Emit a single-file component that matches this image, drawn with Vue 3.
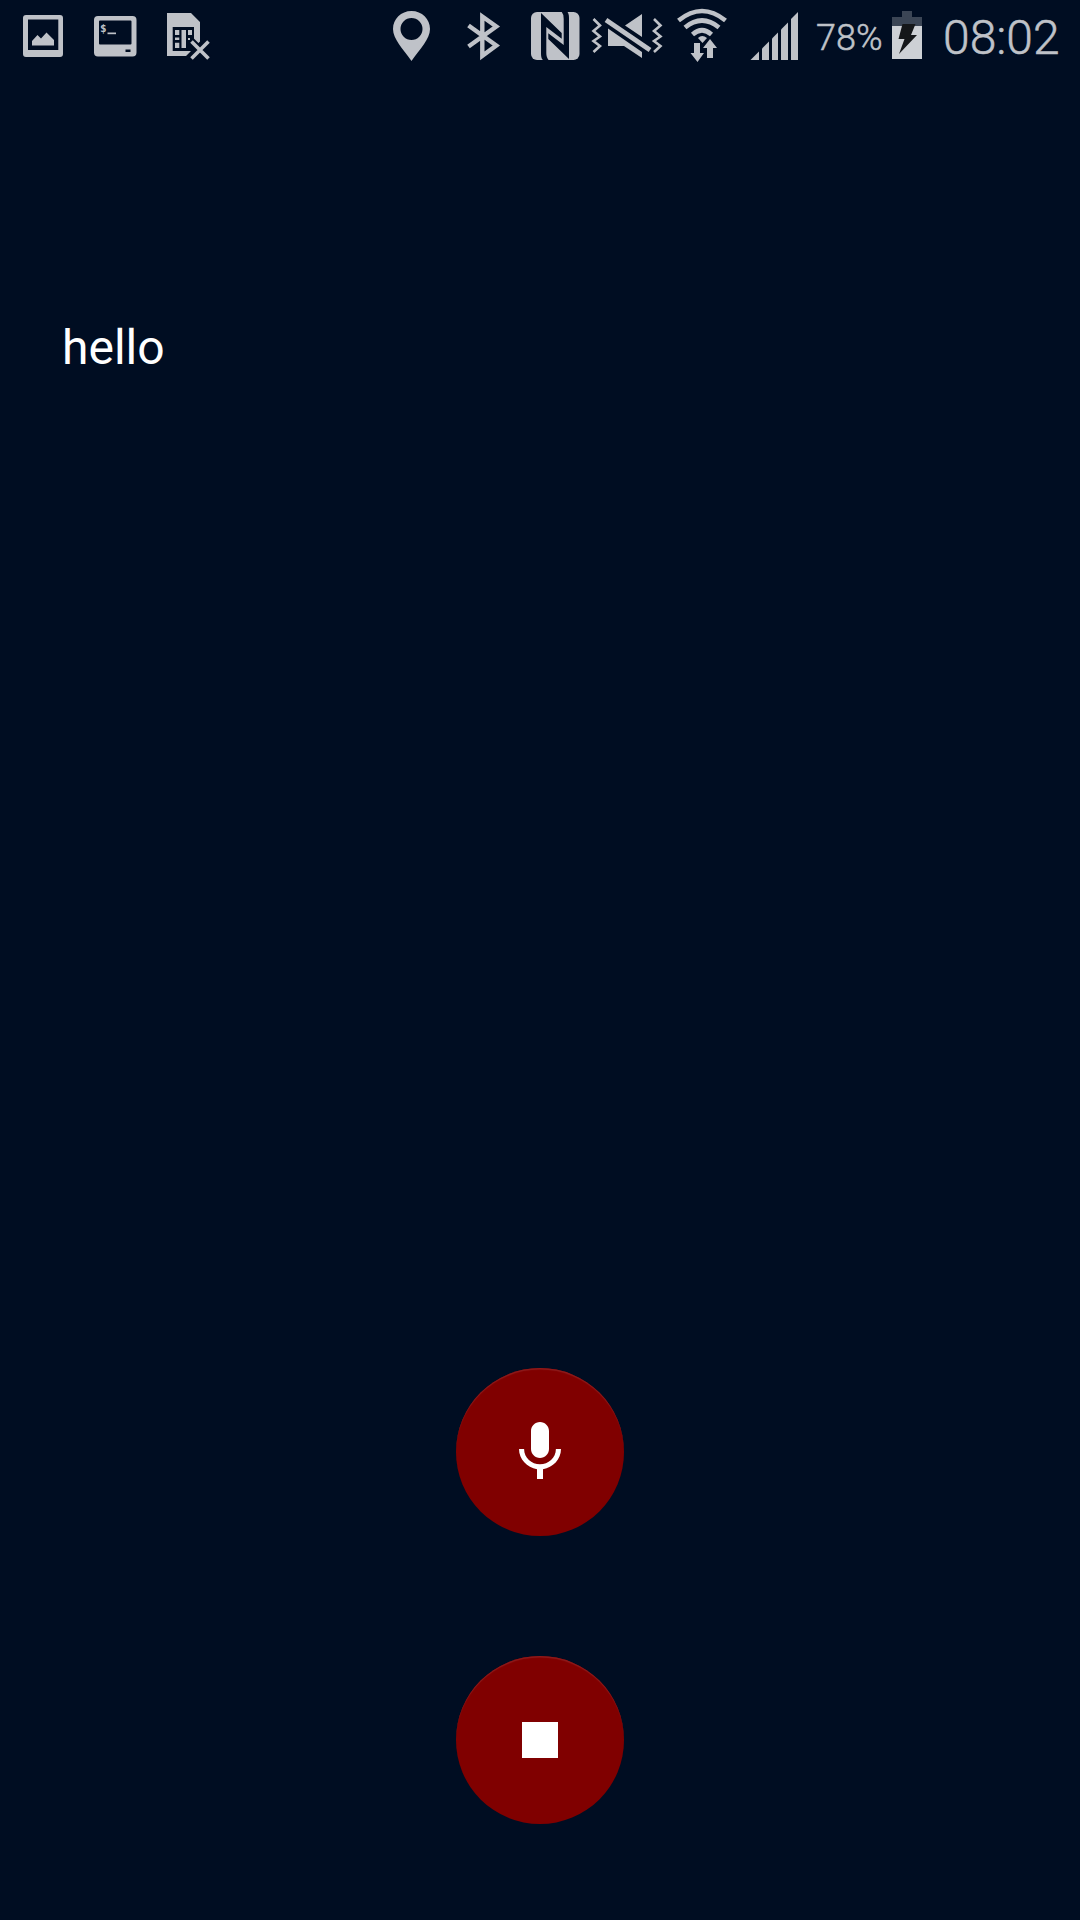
<script setup>
const bars = [
  'M750.500 60H759V51.500Z',
  'M762 60V48.500L769 41.500V60Z',
  'M772 60V38.500L778 32.500V60Z',
  'M781 60V29.500L788 22.500V60Z',
  'M791 60V19L798 12V60Z'
]
</script>

<template>
  <main class="screen">
    <header class="status">
      <svg width="75" height="75" viewBox="0 0 75 75">
        <path fill-rule="evenodd" d="M26 15H60Q63 15 63 18V54Q63 57 60 57H26Q23 57 23 54V18Q23 15 26 15ZM28 19.500V50H58.300V19.500Z" />
        <path d="M32 45.500V41L37.500 35L41 38.500L46.500 32.500L54 40V45.500Z" />
      </svg>
      <svg width="75" height="75" viewBox="75 0 75 75">
        <path fill-rule="evenodd" d="M98 16H132.500Q136.500 16 136.500 20V52.500Q136.500 56.500 132.500 56.500H98Q94 56.500 94 52.500V20Q94 16 98 16ZM100 20.500Q99 20.500 99 21.500V43.500Q99 44.500 100 44.500H130.500Q131.500 44.500 131.500 43.500V21.500Q131.500 20.500 130.500 20.500ZM125.500 49.500V52H130.500V49.500Z" />
        <text x="100" y="31.500" class="prompt">$</text>
        <path d="M107.500 32.500H116V34.200H107.500Z" />
      </svg>
      <svg width="75" height="75" viewBox="150 0 75 75">
        <path fill-rule="evenodd" d="M167 13H191L200 22V41.500L194 47.500V27H172.700V51H191L186 56H167Z" />
        <path d="M175 30H179.300V35H175ZM175 37.500H179.300V40H175ZM175 42.700H179.300V48H175ZM181.500 30H186V48H181.500ZM188 30H192V35H188ZM188 38H190V40H188Z" />
        <path class="cut" d="M191.500 41.500L208.500 58.500M208.500 41.500L191.500 58.500" />
        <path class="line" stroke-width="3.600" d="M191.500 41.500L208.500 58.500M208.500 41.500L191.500 58.500" />
      </svg>

      <svg class="push" width="75" height="75" viewBox="375 0 75 75">
        <path fill-rule="evenodd" d="M411.500 11C401 11 393 19 393 29C393 39 403 49 411.500 61C420 49 430 39 430 29C430 19 422 11 411.500 11ZM411.500 18A11 11 0 1 1 411.500 40A11 11 0 1 1 411.500 18Z" />
      </svg>
      <svg width="65" height="75" viewBox="450 0 65 75">
        <path class="line" stroke-width="4.400" d="M468.500 25.500L496.300 45.500L482.300 55.800V16.500L496.300 26.500L468.500 46.500" />
      </svg>
      <svg width="75" height="75" viewBox="515 0 75 75">
        <rect x="531" y="12" width="48.500" height="48" rx="6" />
        <path class="groove" d="M541 13L561.700 33V38.700L546.300 27V53Q546.300 58 549 60.500H543.500Q541 59 541 54Z" />
        <path class="groove" d="M569 59L548.300 39V33.300L563.700 45V19Q563.700 14 561.500 11.500H567Q569 13 569 18Z" />
      </svg>
      <svg width="78" height="75" viewBox="590 0 78 75">
        <path class="line" stroke-width="2.600" d="M593.500 19L600 25.500L593.500 31L600 36.500L593.500 41L600 46L593.500 52M654 19L660.500 25.500L654 31L660.500 36.500L654 41L660.500 46L654 52" />
        <path d="M608 28.500L642 52V58L624 46H608ZM642 14V37L625 25.500Z" />
        <path class="cut" d="M606 20L650 50" stroke-width="9" />
        <path class="line" stroke-width="4.800" d="M606 20L650 50" />
      </svg>
      <svg width="72" height="75" viewBox="668 0 72 75">
        <path class="line" stroke-width="4.600" d="M678.500 20.500Q702 1.500 725.500 20.500M685 27.500Q702 13.500 719 27.500M692.500 34.500Q702 26 711.500 34.500" />
        <path d="M698 38Q702 34 707 38L702.500 43Z" />
        <path d="M694 43H700V53H704L697.500 62L690.500 53H694ZM707 58V48H703L710 39L717 48H713V58Z" />
      </svg>
      <svg width="70" height="75" viewBox="740 0 70 75">
        <path v-for="bar in bars" :key="bar" :d="bar" />
      </svg>
      <span class="percent">78%</span>
      <svg width="48" height="75" viewBox="886 0 48 75">
        <path fill="#3b4555" d="M902 11H912V17H922V26H892V17H902Z" />
        <path fill="#cdd0d5" d="M892 26H922V59H892Z" />
        <path fill="#15171a" d="M902.500 24H915.500L911 35H917L899 54L904.500 39H898.500Z" />
      </svg>
      <time class="clock">08:02</time>
    </header>

    <p class="message">hello</p>

    <section class="controls">
      <button class="round" aria-label="Record">
        <svg width="72" height="72" viewBox="0 0 24 24">
          <path d="M12 14c1.660 0 3-1.340 3-3V5c0-1.660-1.340-3-3-3S9 3.340 9 5v6c0 1.660 1.340 3 3 3zm5.300-3c0 3-2.540 5.100-5.300 5.100S6.700 14 6.700 11H5c0 3.410 2.720 6.230 6 6.720V21h2v-3.280c3.280-.48 6-3.300 6-6.720h-1.700z" />
        </svg>
      </button>
      <button class="round" aria-label="Stop">
        <svg width="72" height="72" viewBox="0 0 24 24"><path d="M6 6h12v12H6z" /></svg>
      </button>
    </section>
  </main>
</template>

<style>
body {
  margin: 0;
  background: #000d22;
}
</style>

<style scoped>
.screen {
  display: flex;
  flex-direction: column;
  width: 1080px;
  height: 1920px;
  overflow: hidden;
  background: #000d22;
  font-family: Roboto, sans-serif;
}
.status {
  display: flex;
  height: 75px;
  color: #bfc2c8;
}
svg {
  display: block;
  flex: none;
  fill: currentColor;
}
.push {
  margin-left: 150px;
}
.line {
  fill: none;
  stroke: currentColor;
}
.cut {
  fill: none;
  stroke: #000d22;
  stroke-width: 7.500px;
}
.groove {
  fill: #000d22;
}
.prompt {
  font: bold 11px "DejaVu Sans Mono", monospace;
}
.percent {
  width: 70px;
  padding: 17px 0 0 6px;
  box-sizing: content-box;
  font-size: 36px;
  font-weight: 300;
  line-height: 42px;
  -webkit-text-stroke: 0.500px currentColor;
}
.clock {
  padding: 10px 0 0 9px;
  font-size: 48px;
  font-weight: 300;
  line-height: 56px;
  -webkit-text-stroke: 0.500px currentColor;
}
.message {
  margin: 245px 0 0 62px;
  color: #fff;
  font-size: 48px;
  line-height: 56px;
}
.controls {
  display: flex;
  flex-direction: column;
  align-items: center;
  gap: 120px;
  margin-top: auto;
  padding-bottom: 96px;
}
.round {
  display: flex;
  align-items: center;
  justify-content: center;
  width: 168px;
  height: 168px;
  padding: 0;
  border: 0;
  border-radius: 50%;
  background: #800000;
  box-shadow: inset 0 2px 1px -0.500px #8d1b1c;
  color: #fff;
}
</style>
